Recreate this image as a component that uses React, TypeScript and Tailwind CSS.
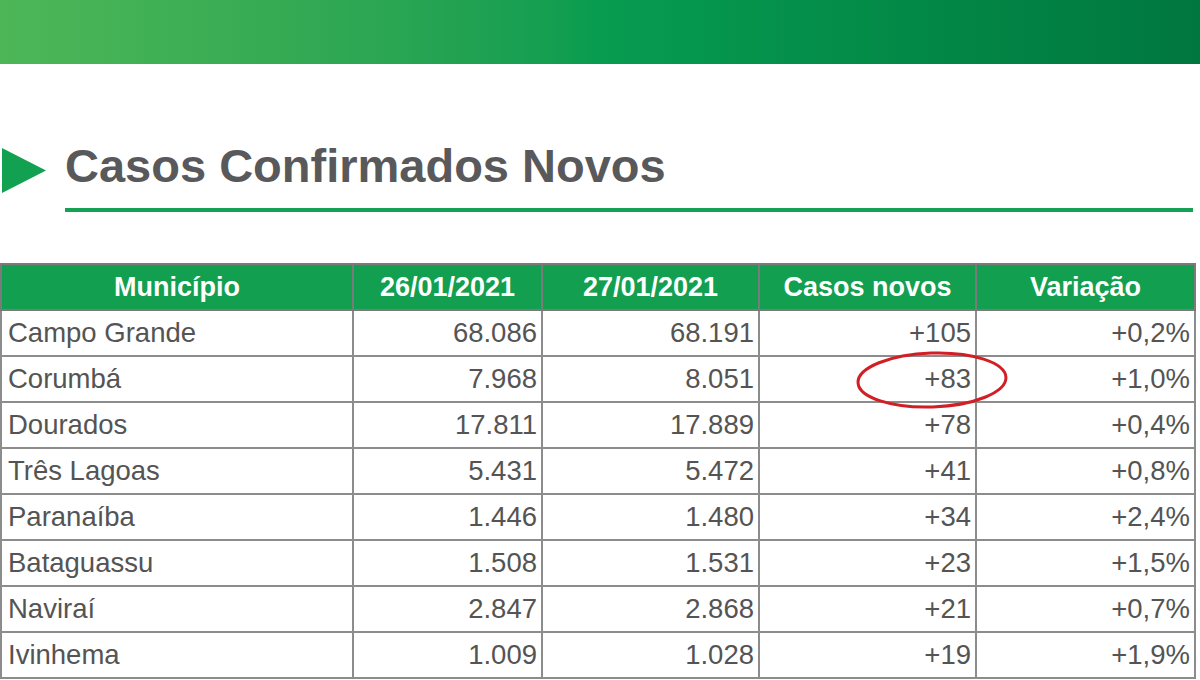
import React from "react";

const rows = [
  ["Campo Grande", "68.086", "68.191", "+105", "+0,2%"],
  ["Corumbá", "7.968", "8.051", "+83", "+1,0%"],
  ["Dourados", "17.811", "17.889", "+78", "+0,4%"],
  ["Três Lagoas", "5.431", "5.472", "+41", "+0,8%"],
  ["Paranaíba", "1.446", "1.480", "+34", "+2,4%"],
  ["Bataguassu", "1.508", "1.531", "+23", "+1,5%"],
  ["Naviraí", "2.847", "2.868", "+21", "+0,7%"],
  ["Ivinhema", "1.009", "1.028", "+19", "+1,9%"],
];

const headers = ["Município", "26/01/2021", "27/01/2021", "Casos novos", "Variação"];

const App = () => {
  return (
    <div
      className="w-[1200px] h-[680px] overflow-hidden bg-white"
      style={{ fontFamily: '"Liberation Sans", Arial, sans-serif' }}
    >
      <div className="h-16 w-full bg-gradient-to-r from-[#4db757] via-[#079c50] to-[#00773f]" />

      <div className="pt-[78px]">
        <div className="flex">
          <svg className="ml-[2px] mt-[6px] w-[44px] h-[45px]" viewBox="0 0 44 45">
            <polygon points="0,0 44,22.5 0,45" fill="#12a150" />
          </svg>
          <div className="ml-[19px] w-[1128px]">
            <h1 className="text-[47px] leading-none font-bold text-[#59595b]">
              Casos Confirmados Novos
            </h1>
            <div className="mt-[19px] h-[4px] bg-[#16a053]" />
          </div>
        </div>

        <div className="relative mt-[51px] w-[1194px]">
          <table className="w-[1194px] table-fixed border-collapse border-2 border-[#6e6e6e]">
            <colgroup>
              <col className="w-[352px]" />
              <col className="w-[189px]" />
              <col className="w-[217px]" />
              <col className="w-[217px]" />
              <col className="w-[219px]" />
            </colgroup>
            <thead>
              <tr className="h-[46px] bg-[#12a050]">
                {headers.map((h) => (
                  <th
                    key={h}
                    className="border-2 border-[#7a7a7a] text-center text-[27px] font-bold text-white p-0"
                  >
                    {h}
                  </th>
                ))}
              </tr>
            </thead>
            <tbody>
              {rows.map((r) => (
                <tr key={r[0]} className="h-[46px]">
                  {r.map((c, i) => (
                    <td
                      key={i}
                      className={`border-2 border-[#8c8c8c] text-[27.5px] text-[#545454] py-0 ${
                        i === 0 ? "text-left pl-[6px]" : "text-right pr-[4px]"
                      }`}
                    >
                      {c}
                    </td>
                  ))}
                </tr>
              ))}
            </tbody>
          </table>

          <svg
            className="absolute left-[854px] top-[87px] w-[156px] h-[60px] -rotate-2"
            viewBox="0 0 156 60"
          >
            <ellipse cx="78" cy="30" rx="74" ry="27" fill="none" stroke="#d11f26" strokeWidth="3" />
          </svg>
        </div>
      </div>
    </div>
  );
};

export default App;
